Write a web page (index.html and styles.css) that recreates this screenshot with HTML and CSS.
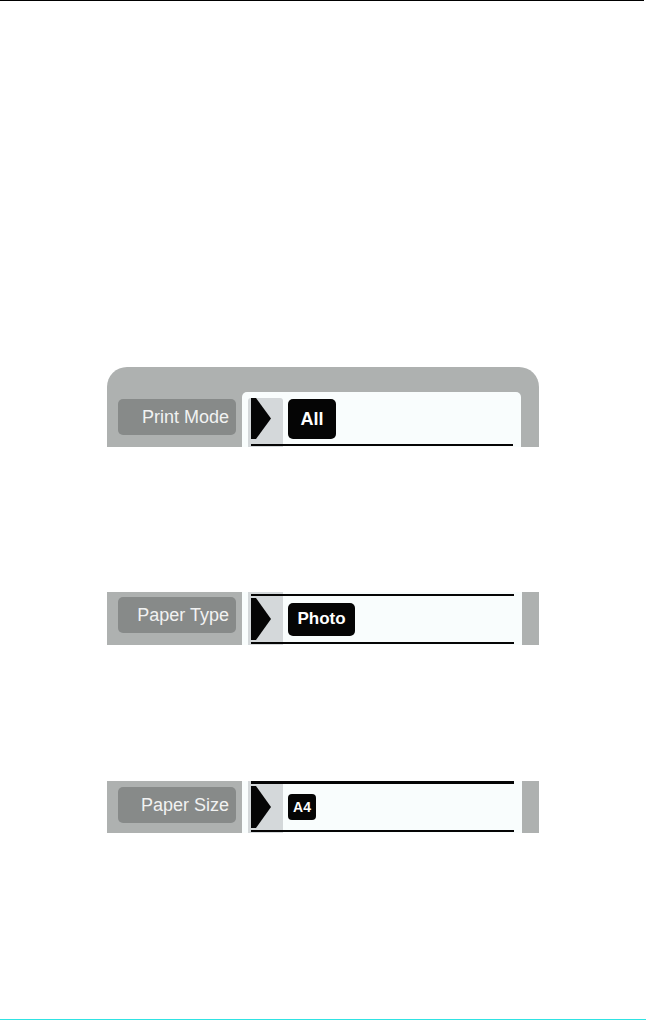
FILE: index.html
```html
<!DOCTYPE html>
<html lang="en">
<head>
<meta charset="utf-8">
<title>Print settings</title>
<link rel="stylesheet" href="styles.css">
</head>
<body>
<div class="page">
  <div class="top-rule"></div>

  <section class="panel panel-mode">
    <div class="label-cell"><div class="label">Print Mode</div></div>
    <div class="field field-mode">
      <div class="col"></div>
      <svg class="arrow" width="20" height="41" viewBox="0 0 20 41"><polygon points="0,0 5,0 20,20.5 5,41 0,41" fill="#050505"/></svg>
      <div class="badge badge-all">All</div>
      <div class="line line-bottom"></div>
    </div>
    <div class="right-cell"></div>
  </section>

  <section class="panel panel-type">
    <div class="label-cell"><div class="label">Paper Type</div></div>
    <div class="field field-type">
      <div class="col"></div>
      <div class="line line-top"></div>
      <svg class="arrow" width="20" height="42" viewBox="0 0 20 42"><polygon points="0,0 5,0 20,21 5,42 0,42" fill="#050505"/></svg>
      <div class="badge badge-photo">Photo</div>
      <div class="line line-bottom"></div>
    </div>
    <div class="right-cell"></div>
  </section>

  <section class="panel panel-size">
    <div class="label-cell"><div class="label">Paper Size</div></div>
    <div class="field field-size">
      <div class="col"></div>
      <div class="line line-top"></div>
      <svg class="arrow" width="20" height="42" viewBox="0 0 20 42"><polygon points="0,0 5,0 20,21 5,42 0,42" fill="#050505"/></svg>
      <div class="badge badge-a4">A4</div>
      <div class="line line-bottom"></div>
    </div>
    <div class="right-cell"></div>
  </section>

  <div class="bottom-rule"></div>
</div>
</body>
</html>
```
FILE: styles.css
```css
html, body {
  margin: 0;
  padding: 0;
  background: #ffffff;
}
body {
  font-family: "Liberation Sans", Arial, sans-serif;
}
.page {
  width: 646px;
  height: 1020px;
  display: flex;
  flex-direction: column;
  overflow: hidden;
}
.top-rule {
  width: 644px;
  height: 1px;
  background: #000000;
  flex: none;
}
.bottom-rule {
  width: 646px;
  height: 1px;
  background: #2fe3e3;
  margin-top: 186px;
  flex: none;
}
.panel {
  display: flex;
  width: 432px;
  margin-left: 107px;
  background: #aeb1b0;
  flex: none;
}
.panel-mode {
  margin-top: 366px;
  height: 80px;
  padding-top: 25px;
  box-sizing: border-box;
  border-radius: 20px 20px 0 0;
}
.panel-type {
  margin-top: 145px;
  height: 53px;
}
.panel-size {
  margin-top: 136px;
  height: 52px;
}
.label-cell {
  width: 135px;
  flex: none;
}
.panel-mode .label-cell { padding-top: 7px; }
.panel-type .label-cell { padding-top: 5px; }
.panel-size .label-cell { padding-top: 6px; }
.label {
  margin-left: 11px;
  width: 118px;
  height: 36px;
  box-sizing: border-box;
  padding-right: 7px;
  background: #878a89;
  border-radius: 5px;
  color: #f1f2f2;
  font-size: 18px;
  display: flex;
  align-items: center;
  justify-content: flex-end;
}
.field {
  width: 280px;
  flex: none;
  background: #f9fdfd;
  display: grid;
  grid-template-columns: 6px 3px 32px 1fr 8px;
}
.field-mode {
  width: 279px;
  border-radius: 5px 5px 0 0;
  grid-template-rows: 6px 2px 1fr 2px 1px;
}
.field-type {
  grid-template-rows: 2px 2px 1fr 2px 1px;
}
.field-size {
  grid-template-rows: 0 3px 1fr 2px 1px;
}
.col {
  grid-column: 2 / 4;
  grid-row: 1 / 6;
  background: #d4d8da;
}
.field-mode .col {
  grid-row: 2 / 6;
  border-radius: 3px 3px 0 0;
}
.field-size .col {
  grid-row: 2 / 6;
}
.line {
  grid-column: 3 / 5;
  background: #050505;
}
.line-top { grid-row: 2; }
.line-bottom { grid-row: 4; }
.arrow {
  grid-column: 3;
  grid-row: 3;
  align-self: center;
  display: block;
}
.field-mode .arrow {
  grid-row: 2 / 4;
  align-self: start;
}
.badge {
  grid-column: 4;
  grid-row: 3;
  align-self: center;
  justify-self: start;
  margin-left: 5px;
  background: #050505;
  color: #ffffff;
  font-weight: bold;
  border-radius: 5px;
  display: flex;
  align-items: center;
  justify-content: center;
}
.badge-all {
  grid-row: 2 / 4;
  align-self: start;
  margin-top: 1px;
  width: 48px;
  height: 40px;
  font-size: 18px;
}
.badge-photo {
  width: 67px;
  height: 33px;
  font-size: 17px;
}
.badge-a4 {
  width: 28px;
  height: 26px;
  font-size: 14px;
  border-radius: 4px;
}
.right-cell {
  width: 17px;
  flex: none;
}
```
